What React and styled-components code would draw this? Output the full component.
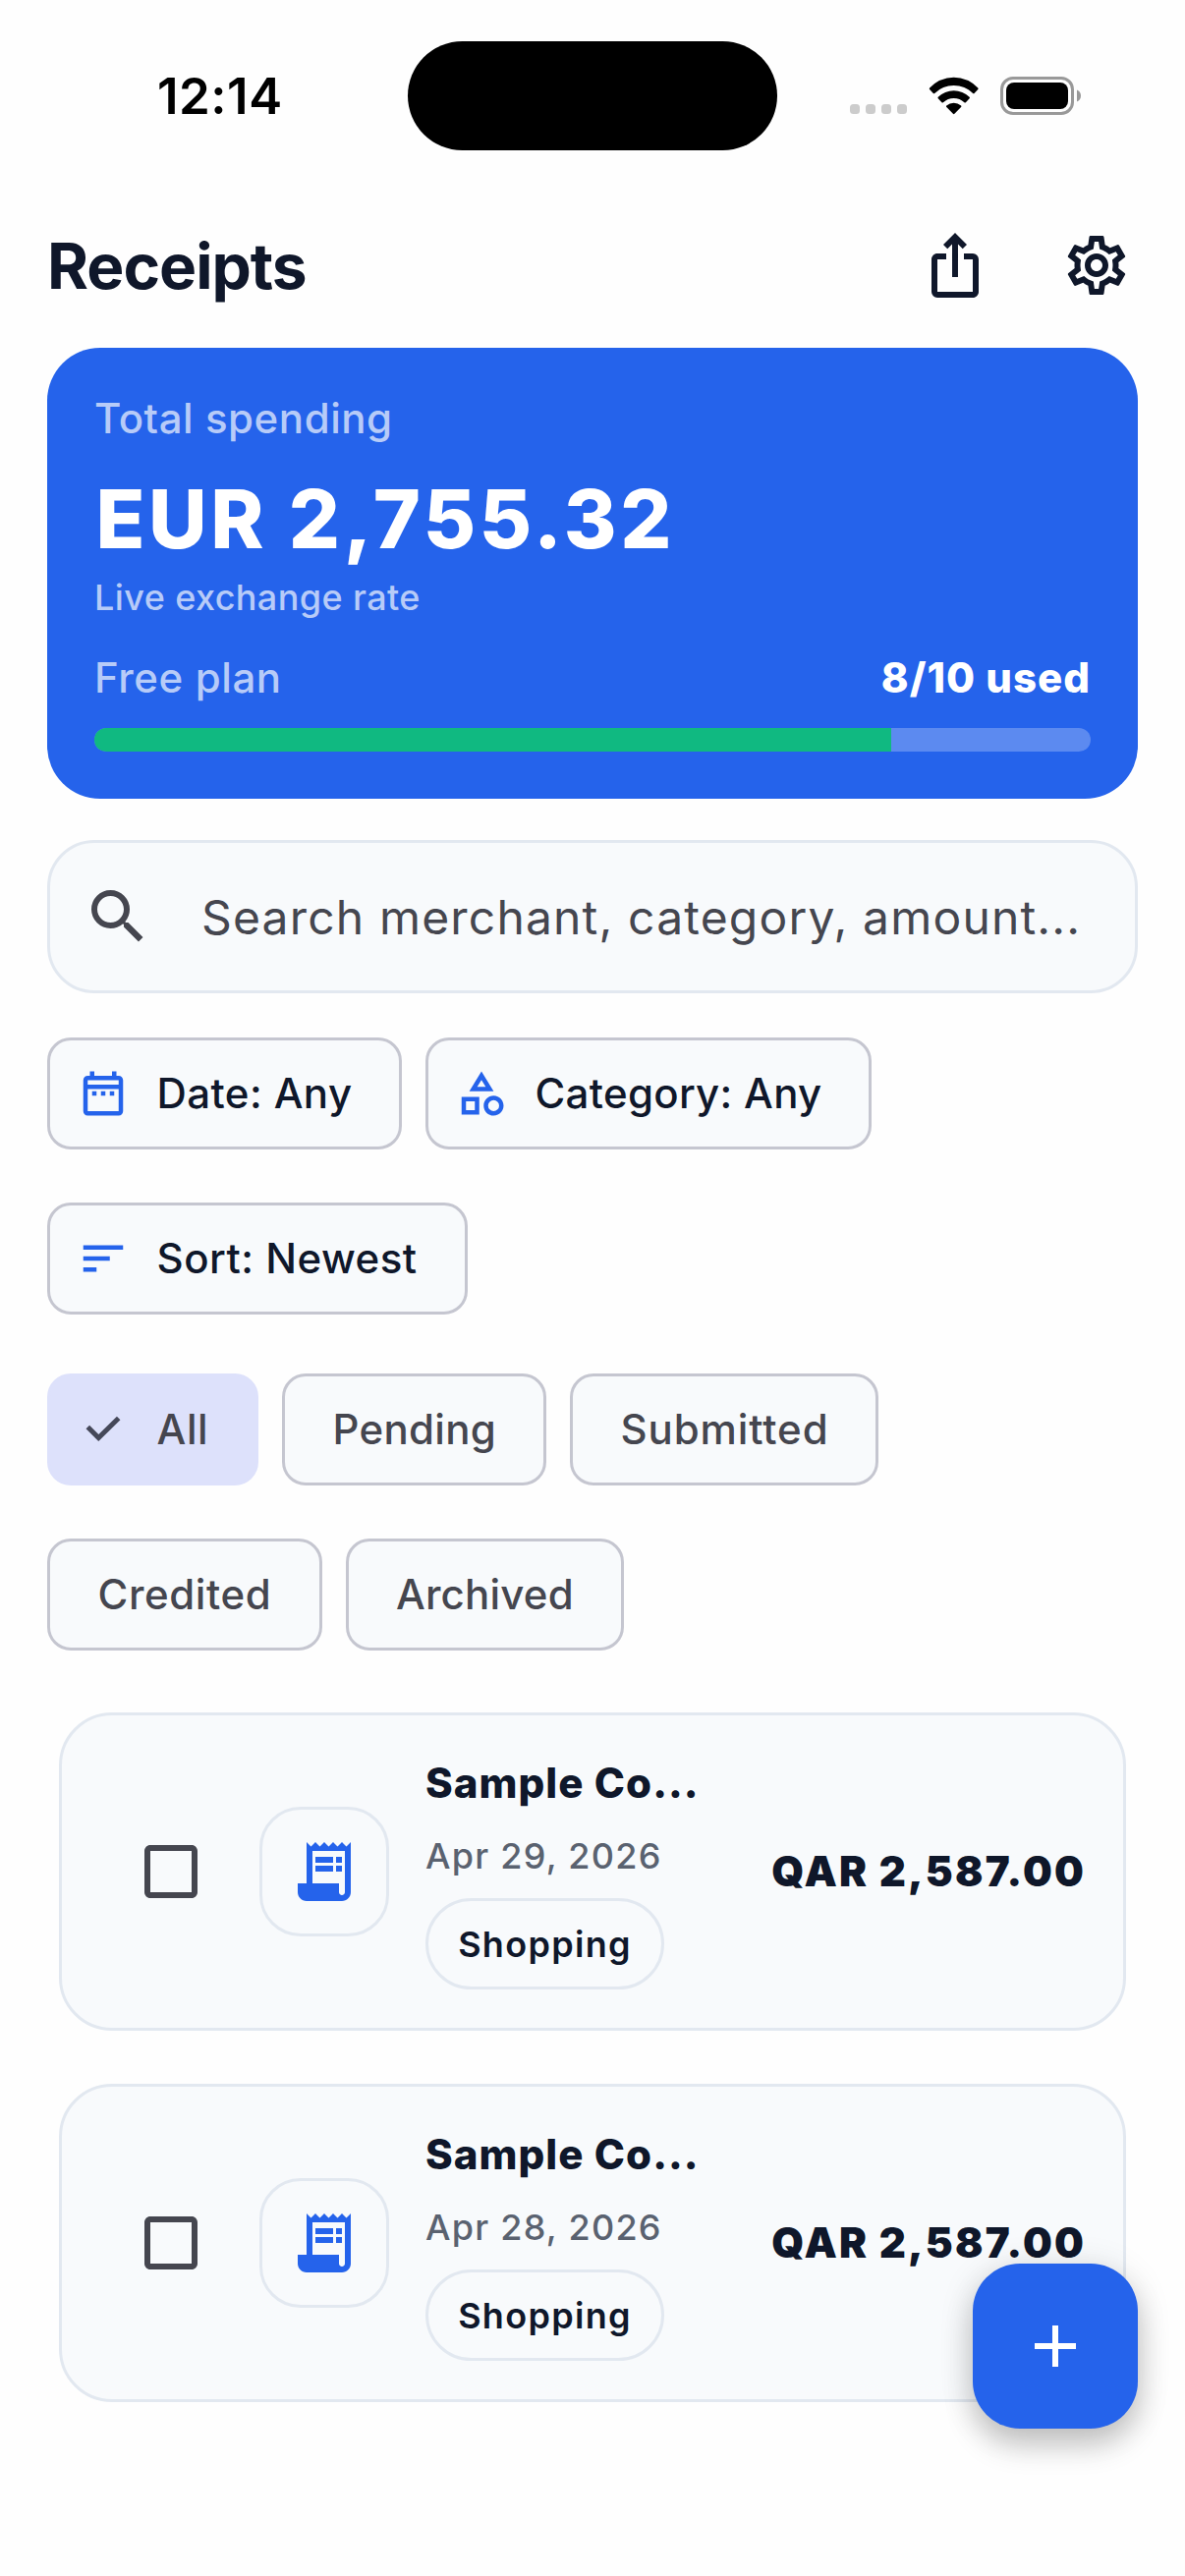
import React from "react";
import styled, { createGlobalStyle } from "styled-components";
import {
  MdSearch,
  MdOutlineCategory,
  MdSort,
  MdAdd,
  MdOutlineSettings,
  MdOutlineIosShare,
  MdCheckBoxOutlineBlank,
} from "react-icons/md";

const Global = createGlobalStyle`
  * { box-sizing: border-box; }
  body { margin: 0; background: #fefefe; }
`;

const Screen = styled.main`
  position: relative;
  width: 1206px;
  height: 2622px;
  overflow: hidden;
  background: #fefefe;
  font-family: Inter, "Liberation Sans", sans-serif;
  color: #0f172a;
`;

const StatusBar = styled.div`
  display: grid;
  grid-template-columns: 415px 376px 415px;
  align-items: center;
  height: 194px;
`;

const Clock = styled.div`
  padding-left: 160px;
  padding-top: 1px;
  font-size: 51px;
  line-height: 60px;
  font-weight: 600;
  letter-spacing: 0.5px;
  color: #000;
`;

const Island = styled.div`
  height: 111px;
  border-radius: 56px;
  background: #000;
`;

const StatusIcons = styled.div`
  display: flex;
  align-items: center;
  padding-left: 73px;
`;

const Header = styled.header`
  display: flex;
  justify-content: space-between;
  align-items: center;
  height: 160px;
  padding: 0 54px 8px 48px;
`;

const Title = styled.h1`
  margin: 0;
  padding-top: 2px;
  font-size: 64px;
  line-height: 80px;
  font-weight: 700;
  letter-spacing: -1px;
`;

const Actions = styled.div`
  display: flex;
  gap: 72px;
  svg { display: block; }
`;

const Body = styled.div`
  display: flex;
  flex-direction: column;
  padding: 0 48px;
`;

const Summary = styled.section`
  height: 459px;
  padding: 47px 48px 48px;
  border-radius: 54px;
  background: #2563eb;
`;

const Line = styled.div`
  display: flex;
  justify-content: space-between;
  height: ${(p) => p.$h}px;
  line-height: ${(p) => p.$h}px;
  margin-top: ${(p) => p.$top || 0}px;
  padding-left: ${(p) => p.$inset || 0}px;
  font-size: ${(p) => p.$size}px;
  font-weight: ${(p) => p.$weight || 500};
  letter-spacing: ${(p) => p.$track}px;
  color: ${(p) => p.$color || "#b7cbf8"};
  white-space: nowrap;
`;

const Used = styled.span`
  font-weight: 800;
  letter-spacing: 1px;
  color: #fff;
`;

const Track = styled.div`
  height: 24px;
  margin-top: 21px;
  border-radius: 12px;
  overflow: hidden;
  background: #5c8af0;
`;

const Fill = styled.div`
  width: 80%;
  height: 100%;
  background: #10b981;
`;

const Search = styled.div`
  display: flex;
  align-items: center;
  height: 156px;
  margin-top: 42px;
  padding-left: 33px;
  border: 3px solid #e2e8f0;
  border-radius: 48px;
  background: #f8fafc;
  color: #45464f;
`;

const Placeholder = styled.span`
  margin-left: 49px;
  padding-top: 2px;
  font-size: 48px;
  line-height: 60px;
  letter-spacing: 1.17px;
  white-space: nowrap;
`;

const Chips = styled.div`
  display: flex;
  flex-wrap: wrap;
  gap: 54px 24px;
  margin-top: ${(p) => p.$top}px;
`;

const Chip = styled.button`
  display: flex;
  align-items: center;
  width: ${(p) => p.$w}px;
  height: 114px;
  padding: 0 0 0 ${(p) => (p.$icon ? 27 : 48.5)}px;
  border: 3px solid ${(p) => (p.$on ? "#dde1fb" : "#c5c6d0")};
  border-radius: 24px;
  background: ${(p) => (p.$on ? "#dde1fb" : "#f8fafc")};
  color: ${(p) => (p.$muted ? "#45464f" : "#0f172a")};
  font: 500 42px/60px Inter, "Liberation Sans", sans-serif;
  letter-spacing: ${(p) => p.$track}px;
  white-space: nowrap;
`;

const ChipIcon = styled.span`
  display: flex;
  flex: none;
  margin-right: 27.5px;
  color: ${(p) => (p.$muted ? "#454859" : "#2563eb")};
`;

const List = styled.div`
  display: flex;
  flex-direction: column;
  gap: 54px;
  margin: 63px 12px 0;
`;

const Card = styled.article`
  display: flex;
  align-items: center;
  height: 324px;
  border: 3px solid #e2e8f0;
  border-radius: 54px;
  background: #f8fafc;
  padding: 0 39px 0 75px;
`;

const CheckBox = styled.div`
  display: flex;
  width: 72px;
  height: 72px;
  color: #45464f;
`;

const Thumb = styled.div`
  display: flex;
  align-items: center;
  justify-content: center;
  width: 132px;
  height: 132px;
  margin-left: 54px;
  border: 3px solid #e2e8f0;
  border-radius: 42px;
`;

const Info = styled.div`
  width: 300px;
  margin-left: 37px;
`;

const Tag = styled.div`
  display: flex;
  align-items: center;
  justify-content: center;
  width: 243px;
  height: 93px;
  margin-top: 19px;
  border: 3px solid #e2e8f0;
  border-radius: 48px;
  font-size: 36px;
  font-weight: 600;
  letter-spacing: 1.3px;
`;

const Amount = styled.div`
  margin-left: auto;
  margin-right: -1px;
  font-size: 42px;
  line-height: 60px;
  font-weight: 900;
  letter-spacing: 2.15px;
  white-space: nowrap;
`;

const Fab = styled.button`
  position: absolute;
  left: 990px;
  top: 2304px;
  display: flex;
  align-items: center;
  justify-content: center;
  width: 168px;
  height: 168px;
  padding: 0;
  border: 0;
  border-radius: 48px;
  background: #2563eb;
  color: #fff;
  box-shadow: 0 18px 30px rgba(0, 0, 0, 0.19), 0 4px 36px rgba(0, 0, 0, 0.12);
`;

function Signal() {
  return (
    <svg width="238" height="44" viewBox="0 0 238 44">
      <g fill="#ccc">
        <rect x="1" y="31" width="10" height="10" rx="3.5" />
        <rect x="17" y="31" width="10" height="10" rx="3.5" />
        <rect x="33" y="31" width="10" height="10" rx="3.5" />
        <rect x="49" y="31" width="10" height="10" rx="3.5" />
      </g>
      <g transform="translate(79.4 3.8) scale(1.07 1.1)">
        <path d="M25.5 7.5c7 0 13.4 2.7 18.2 7.2.4.4 1 .4 1.3 0l3.5-3.5c.4-.4.4-1.1 0-1.5A33.5 33.5 0 0 0 25.5 0 33.5 33.5 0 0 0 2.5 9.7c-.4.4-.4 1.1 0 1.5L6 14.7c.4.4 1 .4 1.3 0A26.5 26.5 0 0 1 25.5 7.5Z" />
        <path d="M25.5 19.3c3.8 0 7.3 1.4 10 3.8.4.4 1 .4 1.4 0l3.5-3.5c.4-.4.4-1.1 0-1.5a21.8 21.8 0 0 0-29.8 0c-.4.4-.4 1.1 0 1.5l3.5 3.5c.4.4 1 .4 1.4 0 2.7-2.4 6.2-3.8 10-3.8Z" />
        <path d="M32.4 27.4c.4-.4.4-1.1 0-1.4a10.7 10.7 0 0 0-13.8 0c-.4.3-.4 1 0 1.4l6.2 6.3c.4.4 1 .4 1.4 0Z" />
      </g>
      <rect x="155.5" y="4.5" width="72" height="36" rx="11.5" fill="none" stroke="#999" strokeWidth="3" />
      <rect x="160" y="9" width="63" height="27" rx="8" />
      <path d="M232 16.5v12c2.5-1 4-3.300 4-6s-1.500-5-4-6Z" fill="#999" />
    </svg>
  );
}

function Calendar({ size }) {
  return (
    <svg width={size} height={size} viewBox="0 0 24 24" fill="currentColor">
      <path d="M7 11h2v2H7zm14-5v14c0 1.1-.9 2-2 2H5c-1.11 0-2-.9-2-2l.01-14c0-1.100.88-2 1.990-2h1V2h2v2h8V2h2v2h1c1.100 0 2 .9 2 2M5 8h14V6H5zm14 12V10H5v10zm-4-7h2v-2h-2zm-4 0h2v-2h-2z" />
    </svg>
  );
}

function Check() {
  return (
    <svg width="54" height="54" viewBox="0 0 54 54" fill="none" stroke="currentColor" strokeWidth="5">
      <path d="M11.3 24.5 22.3 35.5 42.7 15.5" />
    </svg>
  );
}

function Receipt() {
  return (
    <svg width="72" height="72" viewBox="0 0 24 24" fill="#2563eb">
      <path d="M19.5 3.5 18 2l-1.5 1.5L15 2l-1.5 1.5L12 2l-1.5 1.5L9 2 7.5 3.5 6 2v14H3v3c0 1.66 1.34 3 3 3h12c1.66 0 3-1.34 3-3V2zM19 19c0 .55-.45 1-1 1s-1-.45-1-1v-3H8V5h11z" />
      <path d="M9 7h6v2H9zM16 7h2v2h-2zM9 10h6v2H9zM16 10h2v2h-2z" />
    </svg>
  );
}

const filters = [
  { label: "Date: Any", width: 361, track: 0.42, Icon: Calendar },
  { label: "Category: Any", width: 454, track: 0.3, Icon: MdOutlineCategory },
  { label: "Sort: Newest", width: 428, track: 0.5, Icon: MdSort },
];

const statuses = [
  { label: "All", width: 215, track: 0.6, selected: true },
  { label: "Pending", width: 269, track: 0.3 },
  { label: "Submitted", width: 314, track: 0.9 },
  { label: "Credited", width: 279.5, track: 0.6 },
  { label: "Archived", width: 283, track: 0.2 },
];

const receipts = ["Apr 29, 2026", "Apr 28, 2026"];

export default function App() {
  return (
    <Screen>
      <Global />
      <StatusBar>
        <Clock>12:14</Clock>
        <Island />
        <StatusIcons><Signal /></StatusIcons>
      </StatusBar>
      <Header>
        <Title>Receipts</Title>
        <Actions>
          <MdOutlineIosShare size={72} />
          <MdOutlineSettings size={72} />
        </Actions>
      </Header>
      <Body>
        <Summary>
          <Line $h={50} $size={42} $track={0.55}>Total spending</Line>
          <Line $h={100} $size={82} $weight={800} $track={3.6} $top={28} $inset={1.5} $color="#fff">EUR 2,755.32</Line>
          <Line $h={48} $size={36} $track={0.4} $top={5}>Live exchange rate</Line>
          <Line $h={60} $size={42} $track={0.6} $top={28}>
            <span>Free plan</span>
            <Used>8/10 used</Used>
          </Line>
          <Track><Fill /></Track>
        </Summary>
        <Search>
          <MdSearch size={72} />
          <Placeholder>Search merchant, category, amount...</Placeholder>
        </Search>
        <Chips $top={45}>
          {filters.map(({ label, width, track, Icon }) => (
            <Chip key={label} $w={width} $track={track} $icon>
              <ChipIcon><Icon size={54} /></ChipIcon>
              {label}
            </Chip>
          ))}
        </Chips>
        <Chips $top={60}>
          {statuses.map(({ label, width, track, selected }) => (
            <Chip key={label} $w={width} $track={track} $icon={selected} $on={selected} $muted>
              {selected && <ChipIcon $muted><Check /></ChipIcon>}
              {label}
            </Chip>
          ))}
        </Chips>
        <List>
          {receipts.map((date) => (
            <Card key={date}>
              <CheckBox><MdCheckBoxOutlineBlank size={72} /></CheckBox>
              <Thumb><Receipt /></Thumb>
              <Info>
                <Line $h={60} $size={42} $weight={800} $track={1.05} $color="#0f172a">Sample Co...</Line>
                <Line $h={48} $size={36} $track={1.25} $top={20} $color="#5a6270">{date}</Line>
                <Tag>Shopping</Tag>
              </Info>
              <Amount>QAR 2,587.00</Amount>
            </Card>
          ))}
        </List>
      </Body>
      <Fab><MdAdd size={72} /></Fab>
    </Screen>
  );
}
